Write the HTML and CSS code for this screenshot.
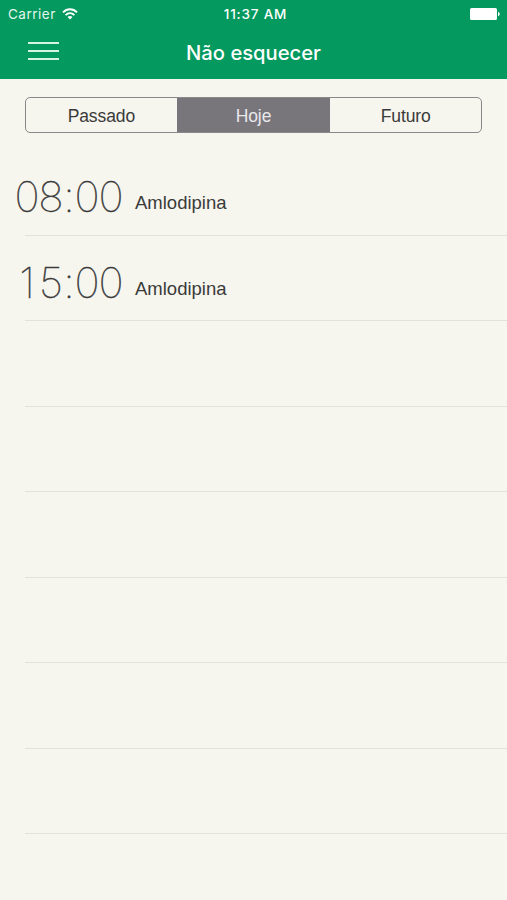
FILE: index.html
```html
<!DOCTYPE html>
<html lang="pt">
<head>
    <meta charset="UTF-8">
    <meta name="viewport" content="width=device-width, initial-scale=1.0">
    <title>Não esquecer</title>
    <link rel="stylesheet" href="styles.css">
</head>
<body>

    <header class="header">
        <div class="status-bar">
            <div class="carrier">
                <span>Carrier</span>
                <svg class="wifi" width="16" height="12" viewBox="0 0 16 12" fill="none" stroke="#fff" stroke-width="1.9">
                    <path d="M1 4.4 C5 0.2 11 0.2 15 4.4"/>
                    <path d="M3.6 7.1 C6.2 4.5 9.8 4.5 12.4 7.1"/>
                    <path d="M8 11.4 L5.5 8.9 C6.9 7.6 9.1 7.6 10.5 8.9 Z" fill="#fff" stroke="none"/>
                </svg>
            </div>
            <div class="clock">11:37 AM</div>
            <div class="battery">
                <svg width="30" height="12" viewBox="0 0 30 12" fill="#fff">
                    <rect x="0" y="0" width="27" height="12" rx="1.6"/>
                    <path d="M28 3.8 C30.3 4.6 30.3 7.4 28 8.2 Z"/>
                </svg>
            </div>
        </div>
        <div class="nav-bar">
            <div class="menu-button">
                <span></span>
                <span></span>
                <span></span>
            </div>
            <h1 class="title">Não esquecer</h1>
        </div>
    </header>

    <div class="tabs">
        <div class="tab">Passado</div>
        <div class="tab active">Hoje</div>
        <div class="tab">Futuro</div>
    </div>

    <div class="list">
        <div class="row">
            <div class="time"><span>0</span><span>8</span><span class="colon">:</span><span>0</span><span>0</span></div>
            <div class="name">Amlodipina</div>
        </div>
        <div class="row">
            <div class="time"><span>1</span><span>5</span><span class="colon">:</span><span>0</span><span>0</span></div>
            <div class="name">Amlodipina</div>
        </div>
        <div class="row"></div>
        <div class="row"></div>
        <div class="row"></div>
        <div class="row"></div>
        <div class="row"></div>
        <div class="row"></div>
    </div>

</body>
</html>
```

FILE: styles.css
```css
* {
    box-sizing: border-box;
}

body {
    margin: 0;
    height: 900px;
    overflow: hidden;
    background: #f6f5ee;
    color: #3a3a3a;
    font-family: 'Liberation Sans', sans-serif;
}

.header {
    height: 79px;
    background: #04995e;
    color: white;
}

.status-bar {
    display: grid;
    grid-template-columns: 1fr auto 1fr;
    align-items: center;
    height: 27px;
    padding: 0 7px 0 8px;
    font-family: Inter, sans-serif;
    font-size: 13.5px;
}

.carrier {
    display: flex;
    align-items: center;
    gap: 6px;
    letter-spacing: 0.5px;
    color: #e4f7ec;
}

.wifi {
    display: block;
}

.clock {
    padding-left: 3px;
    font-size: 13.5px;
    font-weight: 550;
    letter-spacing: 0.8px;
}

.battery {
    display: flex;
    justify-content: flex-end;
}

.nav-bar {
    display: grid;
    grid-template-columns: 1fr auto 1fr;
    align-items: center;
    height: 50px;
    padding: 0 28px;
}

.menu-button {
    display: flex;
    flex-direction: column;
    gap: 6px;
    width: 31px;
    padding-bottom: 2px;
}

.menu-button span {
    height: 2px;
    background: #d5f4e4;
}

.title {
    margin: 0;
    font-family: Inter, sans-serif;
    font-size: 20.2px;
    font-weight: 550;
}

.tabs {
    display: flex;
    height: 36px;
    margin: 18px 25px 0;
    border: 1px solid #8a898a;
    border-radius: 5px;
    overflow: hidden;
}

.tab {
    width: 151px;
    font-size: 17.5px;
    line-height: 36px;
    letter-spacing: -0.1px;
    text-align: center;
}

.tab.active {
    width: 154px;
    background: #78767b;
    color: #e9e8ec;
}

.list {
    margin-top: 17px;
}

.row {
    display: flex;
    height: 85.5px;
    margin-left: 25px;
    padding-top: 21px;
    border-bottom: 1px solid #e2e1dc;
}

.time {
    display: flex;
    width: 120px;
    margin-left: -10px;
    font-family: Inter, sans-serif;
    font-size: 42.5px;
    font-weight: 100;
    line-height: 52px;
    -webkit-text-stroke: 0.5px #3a3a3a;
}

.time span {
    display: flex;
    justify-content: center;
    width: 24px;
}

.time .colon {
    width: 12px;
}

.name {
    padding-top: 21px;
    font-size: 18.5px;
    line-height: 21px;
}
```
